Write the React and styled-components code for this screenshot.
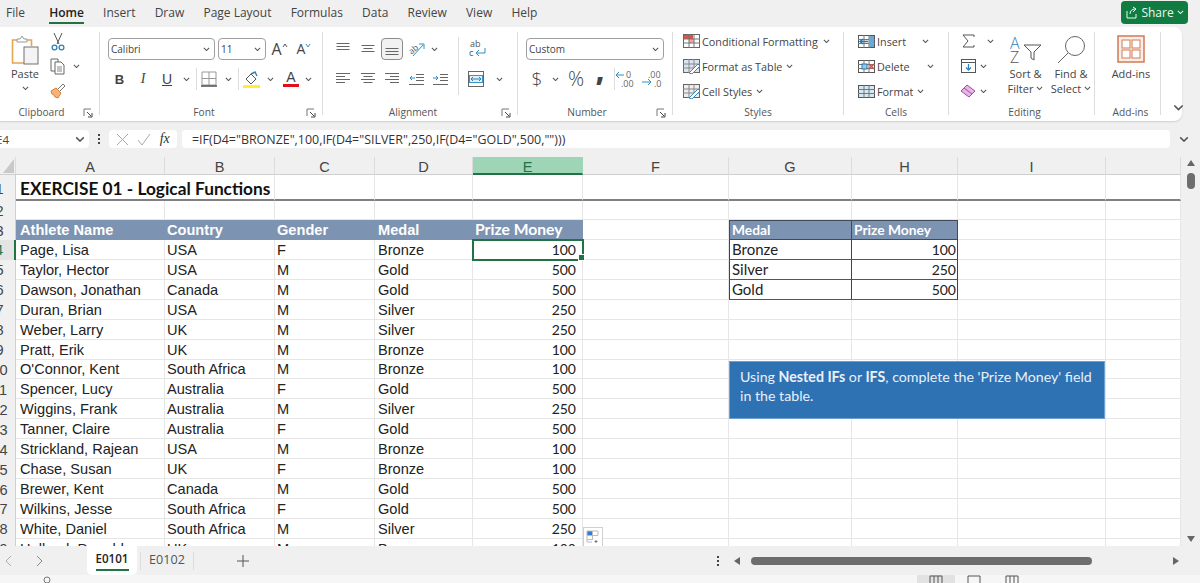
import React from "react";
import styled, { createGlobalStyle } from "styled-components";

const UI = '"Open Sans", "Liberation Sans", sans-serif';
const ARIAL = '"Liberation Sans", Arial, sans-serif';
const CALIBRI = 'Lato, "Open Sans", sans-serif';
const GREEN = "#217346";
const COLS = ["A", "B", "C", "D", "E", "F", "G", "H", "I", "J"];

const athletes = [
  ["Page, Lisa", "USA", "F", "Bronze", 100],
  ["Taylor, Hector", "USA", "M", "Gold", 500],
  ["Dawson, Jonathan", "Canada", "M", "Gold", 500],
  ["Duran, Brian", "USA", "M", "Silver", 250],
  ["Weber, Larry", "UK", "M", "Silver", 250],
  ["Pratt, Erik", "UK", "M", "Bronze", 100],
  ["O'Connor, Kent", "South Africa", "M", "Bronze", 100],
  ["Spencer, Lucy", "Australia", "F", "Gold", 500],
  ["Wiggins, Frank", "Australia", "M", "Silver", 250],
  ["Tanner, Claire", "Australia", "F", "Gold", 500],
  ["Strickland, Rajean", "USA", "M", "Bronze", 100],
  ["Chase, Susan", "UK", "F", "Bronze", 100],
  ["Brewer, Kent", "Canada", "M", "Gold", 500],
  ["Wilkins, Jesse", "South Africa", "F", "Gold", 500],
  ["White, Daniel", "South Africa", "M", "Silver", 250],
  ["Holland, Donald", "UK", "M", "Bronze", 100],
];
const prizes = [["Bronze", 100], ["Silver", 250], ["Gold", 500]];

const Global = createGlobalStyle`
  html, body { margin: 0; padding: 0; height: 100%; overflow: hidden; background: #f0f0f0; }
  * { box-sizing: border-box; }
`;

const Page = styled.div`
  width: 1200px;
  height: 583px;
  overflow: hidden;
  display: flex;
  flex-direction: column;
  font-family: ${UI};
  color: #444;
`;

const TabBar = styled.div`
  height: 27px;
  flex: none;
  display: flex;
  align-items: flex-start;
  padding-left: 6px;
  gap: 19.2px;
  font-size: 12px;
`;
const MenuTab = styled.div`
  height: 24px;
  line-height: 26px;
  white-space: nowrap;
  margin-right: ${p => p.$mr || 0}px;
  color: ${p => (p.$on ? "#222" : "#444")};
  font-weight: ${p => (p.$on ? 600 : 400)};
  border-bottom: ${p => (p.$on ? `2px solid ${GREEN}` : "none")};
`;
const ShareBtn = styled.div`
  margin: 1px 12px 0 auto;
  width: 67px;
  height: 23px;
  background: #107c41;
  border-radius: 4px;
  color: #eef7f1;
  font-size: 12px;
  display: flex;
  align-items: center;
  justify-content: center;
  gap: 3px;
`;

const Ribbon = styled.div`
  width: 1182px;
  height: 94px;
  flex: none;
  background: #fff;
  border-radius: 0 8px 8px 0;
  box-shadow: 0 1px 2px rgba(0, 0, 0, 0.14);
  display: flex;
  align-items: flex-start;
  padding-top: 5px;
  font-size: 11px;
`;
const Group = styled.div`
  width: ${p => p.$w}px;
  height: 83px;
  flex: none;
  display: flex;
  flex-direction: column;
  border-right: 1px solid #dcdcdc;
  padding-left: ${p => p.$pl || 0}px;
  position: relative;
`;
const GroupBody = styled.div`
  flex: 1;
  display: flex;
  min-height: 0;
`;
const GroupLabel = styled.div`
  height: 14px;
  line-height: 14px;
  margin-bottom: -4px;
  margin-left: ${p => -(p.$pl || 0)}px;
  text-align: center;
  font-size: 10.2px;
  color: #555;
  white-space: nowrap;
  padding-right: ${p => p.$pr || 0}px;
`;
const Launcher = styled.span`
  position: absolute;
  right: 6px;
  bottom: -3px;
  display: flex;
`;
const Rows = styled.div`
  display: flex;
  flex-direction: column;
  gap: 8px;
  padding-top: 6px;
  width: ${p => (p.$w ? `${p.$w}px` : "auto")};
  flex: none;
`;
const Row = styled.div`
  display: flex;
  align-items: center;
  height: 22px;
`;
const Tool = styled.span`
  width: ${p => p.$w}px;
  height: 22px;
  flex: none;
  display: inline-flex;
  align-items: center;
  justify-content: center;
  color: #444;
  border: ${p => (p.$on ? "1px solid #8c8c8c" : "none")};
  border-radius: 4px;
  background: ${p => (p.$on ? "#f2f2f2" : "transparent")};
`;
const GlyphB = styled.span`
  font: bold 13px ${ARIAL};
`;
const GlyphI = styled.span`
  font: italic 14px "Liberation Serif", serif;
`;
const GlyphU = styled.span`
  font: 14px ${ARIAL};
  text-decoration: underline;
`;
const GlyphBig = styled.span`
  font: ${p => p.$size}px ${UI};
  line-height: 1;
  font-weight: ${p => p.$weight || 300};
  transform: translateY(${p => p.$y || 0}px);
`;
const Select = styled.div`
  width: ${p => p.$w}px;
  height: 22px;
  flex: none;
  margin-right: ${p => p.$mr || 0}px;
  border: 1px solid #a0a0a0;
  border-radius: 4px;
  display: flex;
  align-items: center;
  justify-content: space-between;
  padding: 0 4px 0 2px;
  font-size: 10px;
`;
const Sep = styled.span`
  width: 1px;
  height: ${p => p.$h || 22}px;
  flex: none;
  background: #dcdcdc;
  margin: 0 ${p => p.$mr || 0}px 0 ${p => p.$ml || 0}px;
`;
const TallSep = styled.div`
  width: 1px;
  height: 58px;
  margin-top: 5px;
  background: #dcdcdc;
  flex: none;
`;
const ListCol = styled.div`
  display: flex;
  flex-direction: column;
  gap: 5px;
  flex: none;
  margin-top: -1px;
  width: ${p => (p.$w ? `${p.$w}px` : "auto")};
`;
const ListRow = styled.div`
  height: 20px;
  display: flex;
  align-items: center;
  gap: 2px;
  white-space: nowrap;
  font-size: 10.8px;
`;
const IconBox = styled.span`
  width: ${p => p.$w || 18}px;
  display: inline-flex;
  justify-content: center;
  flex: none;
`;
const ChevBox = styled.span`
  display: inline-flex;
  margin-left: ${p => p.$ml || 2}px;
`;
const BigBtn = styled.div`
  width: ${p => p.$w}px;
  flex: none;
  display: flex;
  flex-direction: column;
  align-items: center;
  font-size: 11px;
  line-height: 15px;
  white-space: nowrap;
`;
const BigIcon = styled.div`
  height: 34px;
  padding-top: 3px;
  display: flex;
  align-items: flex-start;
  justify-content: center;
  flex: none;
`;
const BigLine = styled.div`
  height: 15px;
  display: flex;
  align-items: center;
  gap: 3px;
`;
const Collapse = styled.div`
  margin: 72px 0 0 12px;
  display: flex;
`;

const FormulaBar = styled.div`
  height: 36px;
  flex: none;
  padding-top: 9px;
  display: flex;
  align-items: flex-start;
`;
const NameBox = styled.div`
  width: 93px;
  height: 18px;
  margin-left: -4px;
  background: #fff;
  border-radius: 4px;
  display: flex;
  align-items: center;
  justify-content: space-between;
  padding-right: 4px;
  font-size: 11.5px;
`;
const Dots = styled.div`
  width: 20px;
  height: 18px;
  display: flex;
  flex-direction: column;
  align-items: center;
  justify-content: center;
  gap: 2px;
`;
const Dot = styled.i`
  width: 2px;
  height: 2px;
  background: #444;
  display: block;
`;
const FnBox = styled.div`
  width: 68px;
  height: 18px;
  margin-right: 5px;
  background: #fff;
  border-radius: 4px;
  display: flex;
  align-items: center;
  justify-content: space-around;
  padding: 0 3px;
`;
const FxText = styled.span`
  font: italic 14px "Liberation Serif", serif;
  color: #333;
`;
const FormulaInput = styled.div`
  width: 988px;
  height: 18px;
  background: #fff;
  border-radius: 4px;
  padding-left: 10px;
  line-height: 19px;
  font-size: 12.45px;
  color: #333;
  white-space: nowrap;
`;
const FormulaChev = styled.div`
  margin-left: 9px;
  height: 18px;
  display: flex;
  align-items: center;
`;

const SheetArea = styled.div`
  height: 389px;
  flex: none;
  display: flex;
  overflow: hidden;
`;
const Sheet = styled.div`
  width: 1197px;
  margin-left: -16px;
  flex: none;
  position: relative;
  overflow: hidden;
  background: #fff;
  display: grid;
  grid-template-columns: 32px 149px 110px 100px 98px 110px 146px 123px 106px 148px 75px;
  grid-template-rows: 18px 26px 19px 20px repeat(16, 19.93px);
`;
const ColHead = styled.div`
  background: ${p => (p.$on ? "#9fd5b7" : "#f0f0f0")};
  color: ${p => (p.$on ? GREEN : "#444")};
  border-bottom: ${p => (p.$on ? `2px solid ${GREEN}` : "1px solid #cfcfcf")};
  border-right: 1px solid ${p => (p.$on ? "#9fd5b7" : "#dcdcdc")};
  font: 14.6px ${ARIAL};
  text-align: center;
  line-height: 20px;
`;
const Corner = styled.div`
  background: #f0f0f0;
  border-bottom: 1px solid #cfcfcf;
  border-right: 1px solid #dcdcdc;
  display: flex;
  align-items: flex-end;
  justify-content: flex-end;
  padding: 0 1px 1px 0;
`;
const RowHead = styled.div`
  background: ${p => (p.$on ? "#e4e4e4" : "#f0f0f0")};
  color: ${p => (p.$on ? GREEN : "#444")};
  border-right: ${p => (p.$on ? `2px solid ${GREEN}` : "1px solid #cfcfcf")};
  font: 14.6px ${ARIAL};
  display: flex;
  align-items: center;
  justify-content: center;
  padding-top: 1px;
`;
const Cell = styled.div`
  position: relative;
  display: flex;
  align-items: center;
  justify-content: ${p => (p.$right ? "flex-end" : "flex-start")};
  white-space: nowrap;
  color: #222;
  font: 14.6px ${ARIAL};
  padding: 1px ${p => p.$pr ?? 3}px 0 ${p => p.$pl ?? 2}px;
  border-right: 1px solid #e6e6e6;
  border-bottom: 1px solid #e6e6e6;
`;
const Blank = styled(Cell)`
  border-bottom: ${p => (p.$rule ? "2px solid #808080" : "1px solid #e6e6e6")};
`;
const Title = styled(Cell)`
  grid-column: span 2;
  font: bold 17.3px ${CALIBRI};
  color: #111;
  padding-left: 4px;
  padding-top: 2px;
  border-bottom: 2px solid #808080;
`;
const Band = styled(Cell)`
  background: #7d93b2;
  border-color: #7d93b2;
  color: #fff;
  font: bold 14.6px ${ARIAL};
  padding-top: 0;
`;
const BandCalibri = styled(Band)`
  font: bold 15.7px ${CALIBRI};
  padding-left: 2px;
  padding-bottom: 1px;
`;
const Money = styled(Cell)`
  font: 14px ${CALIBRI};
  color: #222;
  padding-top: 0;
`;
const ActiveCell = styled(Money)`
  outline: 2px solid ${GREEN};
  outline-offset: -1px;
  z-index: 2;
  &::after {
    content: "";
    position: absolute;
    right: -3px;
    bottom: -2px;
    width: 5px;
    height: 5px;
    background: ${GREEN};
    border: 1px solid #fff;
  }
`;
const KeyHead = styled(Cell)`
  background: #7d93b2;
  color: #fff;
  font: bold 13.8px ${CALIBRI};
  padding-top: 0;
  padding-bottom: 1px;
  border: 1px solid #3f4a5a;
  border-left-width: ${p => (p.$first ? 1 : 0)}px;
`;
const KeyCell = styled(Cell)`
  font: 15px ${CALIBRI};
  color: #222;
  padding-top: 0;
  border-right: 1px solid #444;
  border-bottom: 1px solid #555;
  border-left: ${p => (p.$first ? "1px solid #444" : "none")};
`;
const KeyNumber = styled(KeyCell)`
  font-size: 14px;
`;
const Note = styled.div`
  position: absolute;
  left: 745px;
  top: 204px;
  width: 376px;
  height: 58px;
  background: #2e72b4;
  border: 1px solid #6d9fd0;
  color: #e9f0f8;
  font: 14.2px/19px ${CALIBRI};
  padding: 5px 9px 5px 10px;
  z-index: 3;
`;
const PasteOptions = styled.div`
  position: absolute;
  left: 599px;
  top: 370px;
  width: 20px;
  height: 20px;
  background: #fff;
  border: 1px solid #d0d0d0;
  display: flex;
  align-items: center;
  justify-content: center;
  z-index: 3;
`;
const VScroll = styled.div`
  width: 19px;
  flex: none;
  display: flex;
  flex-direction: column;
  align-items: center;
  padding-top: 2px;
`;
const VThumb = styled.div`
  width: 8px;
  height: 16px;
  margin-top: 6px;
  background: #6e6e6e;
  border-radius: 4px;
`;
const VEnd = styled.div`
  margin-top: auto;
  padding-bottom: 3px;
  display: flex;
`;

const SheetTabs = styled.div`
  height: 29px;
  flex: none;
  display: flex;
  align-items: center;
  margin-left: -7px;
`;
const NavBtn = styled.span`
  width: 31px;
  display: inline-flex;
  justify-content: center;
  flex: none;
`;
const SheetTab = styled.div`
  height: 29px;
  width: ${p => p.$w}px;
  flex: none;
  display: flex;
  align-items: center;
  justify-content: center;
  font-size: ${p => (p.$on ? 11.6 : 12.6)}px;
  color: ${p => (p.$on ? "#222" : "#555")};
  background: ${p => (p.$on ? "#fff" : "transparent")};
  border-radius: ${p => (p.$on ? "0 0 5px 5px" : "0")};
  margin-left: ${p => p.$ml || 0}px;
  font-weight: ${p => (p.$on ? 600 : 400)};
`;
const TabName = styled.span`
  border-bottom: ${p => (p.$on ? `2px solid ${GREEN}` : "none")};
  padding-bottom: 2px;
  line-height: 16px;
`;
const AddSheet = styled.span`
  margin-left: 43px;
  display: inline-flex;
`;
const HDots = styled(Dots)`
  margin-left: 459px;
  height: 12px;
  width: 20px;
`;
const HScroll = styled.div`
  margin-left: 5px;
  width: 450px;
  display: flex;
  align-items: center;
`;
const HThumb = styled.div`
  width: 341px;
  height: 8px;
  background: #6e6e6e;
  border-radius: 4px;
  margin: 0 80px 0 10px;
  flex: none;
`;
const StatusBar = styled.div`
  height: 8px;
  flex: none;
  background: #f6f6f6;
  display: flex;
  align-items: flex-start;
  overflow: hidden;
`;
const StatusGlyph = styled.span`
  display: inline-flex;
  margin-left: ${p => p.$ml}px;
`;
const ViewBtn = styled.span`
  width: 38px;
  height: 8px;
  margin-left: ${p => p.$ml || 0}px;
  flex: none;
  display: flex;
  justify-content: center;
  background: ${p => (p.$on ? "#e2e2e2" : "transparent")};
`;

const Svg = ({ w, h, children, stroke = "#666" }) => (
  <svg width={w} height={h} viewBox={`0 0 ${w} ${h}`} fill="none" stroke={stroke} strokeWidth="1" style={{ display: "block", flex: "none" }}>
    {children}
  </svg>
);

const Chev = ({ color = "#555", size = 7 }) => (
  <svg width={size} height={size * 0.65} viewBox="0 0 8 5" fill="none" stroke={color} strokeWidth="1.2" style={{ display: "block", flex: "none" }}>
    <path d="M1 1l3 3 3-3" />
  </svg>
);

const LauncherIcon = () => (
  <Launcher>
    <Svg w={10} h={10} stroke="#777">
      <path d="M1 8V1h7" />
      <path d="M4 4l4 4M9 5v4H5" stroke="#444" />
    </Svg>
  </Launcher>
);

const Lines = ({ ys, widths, w = 16, align = "left" }) => (
  <Svg w={w} h={16} stroke="#666">
    {ys.map((y, i) => {
      const len = widths[i];
      const x = align === "left" ? 1 : align === "right" ? w - 1 - len : (w - len) / 2;
      return <path key={y} d={`M${x} ${y + 0.5}h${len}`} />;
    })}
  </Svg>
);

const PasteIcon = () => (
  <Svg w={28} h={30}>
    <path d="M7 5H1.5v23h12" stroke="#e6a552" strokeWidth="1.6" />
    <path d="M15 5h5.5v6" stroke="#e6a552" strokeWidth="1.6" />
    <path d="M6 7V4h3l2-3 2 3h3v3z" stroke="#999" fill="#fff" />
    <rect x="13" y="12" width="14" height="17" fill="#f4f4f4" stroke="#707070" />
  </Svg>
);
const Scissors = () => (
  <Svg w={14} h={19}>
    <path d="M3 1l5 11M11 1L6 12" stroke="#555" />
    <circle cx="3.5" cy="15.5" r="2.4" stroke="#2f82b8" strokeWidth="1.3" />
    <circle cx="10.5" cy="15.5" r="2.4" stroke="#2f82b8" strokeWidth="1.3" />
  </Svg>
);
const CopyIcon = () => (
  <Svg w={16} h={17}>
    <path d="M5 13H1V1h7v3" stroke="#666" />
    <path d="M5 4h6l3 3v9H5z" fill="#fff" stroke="#666" />
    <path d="M7 9h5M7 11h5M7 13h5" stroke="#888" />
  </Svg>
);
const BrushIcon = () => (
  <Svg w={16} h={16}>
    <path d="M1 8l5-3 5 5-3 5-3-1-1-2-2-1z" fill="#f5b37c" stroke="#dc7f35" />
    <path d="M8 6l5-5 2 2-5 5" stroke="#777" fill="#fff" />
  </Svg>
);
const FontGrow = ({ up, size }) => (
  <>
    <GlyphBig $size={size} $weight={400}>A</GlyphBig>
    <Svg w={6} h={14} stroke={up ? "#555" : "#3d8fc4"}>
      <path d={up ? "M1 5l2-3 2 3" : "M1 2l2 3 2-3"} />
    </Svg>
  </>
);
const BorderIcon = () => (
  <Svg w={16} h={16} stroke="#999">
    <path d="M1 1h14v13H1zM8 1v13M1 7.5h14" />
    <path d="M0 15h16" stroke="#444" strokeWidth="1.4" />
  </Svg>
);
const FillIcon = () => (
  <Svg w={17} h={17}>
    <path d="M3 8l5-5 5 5-5 5z" stroke="#555" fill="#fff" />
    <path d="M8 3l4-2 2 4" stroke="#2f82b8" strokeWidth="1.4" />
    <rect x="0" y="14" width="17" height="3" fill="#ffef2e" stroke="none" />
  </Svg>
);
const FontColor = () => (
  <Svg w={16} h={18}>
    <text x="8" y="12" textAnchor="middle" fontFamily={ARIAL} fontSize="14" fill="#444" stroke="none">A</text>
    <rect x="0" y="14" width="16" height="3" fill="#e0101a" stroke="none" />
  </Svg>
);
const OrientIcon = () => (
  <Svg w={18} h={16}>
    <text x="1" y="11" fontFamily={UI} fontSize="8.5" fill="#555" stroke="none" transform="rotate(-40 6 9)">ab</text>
    <path d="M5 15L15 4M11 3h5v5" stroke="#2f8fc4" />
  </Svg>
);
const WrapIcon = () => (
  <Svg w={18} h={20}>
    <text x="2" y="8" fontFamily={UI} fontSize="9" fill="#555" stroke="none">ab</text>
    <text x="1" y="17" fontFamily={UI} fontSize="9" fill="#555" stroke="none">c</text>
    <path d="M17 9v5H8M11 11l-3 3 3 3" stroke="#2f8fc4" />
  </Svg>
);
const MergeIcon = () => (
  <Svg w={16} h={16} stroke="#4b8fb0">
    <rect x="0.5" y="0.5" width="15" height="15" stroke="#666" />
    <rect x="1.5" y="4.5" width="13" height="7" fill="#e0f0f8" stroke="#3b93c8" />
    <path d="M3 8h10M5 6L3 8l2 2M11 6l2 2-2 2" stroke="#2f7fb8" />
  </Svg>
);
const IndentIcon = ({ out }) => (
  <Svg w={15} h={13}>
    <path d="M7 1.5h8M7 4.5h8M7 7.5h8M0 11.5h15" stroke="#666" />
    <path d={out ? "M6 5H1M3 3L1 5l2 2" : "M0 5h5M3 3l2 2-2 2"} stroke="#2f8fc4" />
  </Svg>
);
const DecimalIcon = ({ inc }) => (
  <Svg w={22} h={18}>
    <text x={inc ? 11 : 7} y="8" fontFamily={UI} fontSize="9" fill="#666" stroke="none">{inc ? "0" : ".00"}</text>
    <text x={inc ? 6 : 13} y="17" fontFamily={UI} fontSize="9" fill="#666" stroke="none">{inc ? ".00" : ".0"}</text>
    <path d={inc ? "M9 5H1M4 2L1 5l3 3" : "M1 12h9M7 9l3 3-3 3"} stroke="#2f8fc4" />
  </Svg>
);
const CondIcon = () => (
  <Svg w={17} h={14}>
    <rect x="0.5" y="0.5" width="16" height="13" stroke="#666" fill="#fff" />
    <rect x="1" y="1" width="9" height="4" fill="#e2504a" stroke="none" />
    <rect x="6" y="5" width="5" height="4" fill="#f2a6a0" stroke="none" />
    <path d="M0 5h17M0 9h17M6 0v14M11 0v14" stroke="#777" />
  </Svg>
);
const TablePenIcon = ({ blue }) => (
  <Svg w={17} h={15}>
    <rect x="0.5" y="0.5" width="16" height="13" stroke="#666" fill={blue ? "#d9e6f2" : "#eee"} />
    <path d="M0 5h17M0 9h17M6 0v14M11 0v14" stroke="#888" />
    <path d="M6 14l9-9 2 2-8 8z" fill="#fff" stroke="#3c89bd" />
  </Svg>
);
const CellsIcon = ({ kind }) => (
  <Svg w={17} h={15}>
    <rect x="0.5" y="1.5" width="16" height="12" stroke="#555" fill={kind === "format" ? "#d5e8f6" : "#fff"} />
    <path d="M0 5.5h17M0 9.5h17M6 1v13M11 1v13" stroke="#777" />
    {kind === "insert" && <rect x="11" y="2" width="5" height="11" fill="#6aa9d6" stroke="none" />}
    {kind === "insert" && <path d="M10 7.5H2M5 5L2 7.5 5 10" stroke="#2278b5" strokeWidth="1.4" />}
    {kind === "delete" && <path d="M11 5l5 5M16 5l-5 5" stroke="#d8453f" strokeWidth="1.3" />}
    {kind === "delete" && <rect x="4" y="5" width="5" height="5" fill="#9cc8e6" stroke="#2278b5" />}
  </Svg>
);
const SigmaIcon = () => (
  <Svg w={13} h={14} stroke="#555">
    <path d="M12 3V1H1l5 6-5 6h11v-2" />
  </Svg>
);
const FillDown = () => (
  <Svg w={15} h={14}>
    <rect x="0.5" y="0.5" width="14" height="13" stroke="#555" />
    <path d="M0 3.5h15" stroke="#555" />
    <path d="M7.5 5v6M5 8.5l2.5 2.5L10 8.5" stroke="#2f82c0" strokeWidth="1.3" />
  </Svg>
);
const EraserIcon = () => (
  <Svg w={16} h={14}>
    <path d="M1 7l6-6 8 6-6 6z" fill="#e7b6e6" stroke="#a64aa6" />
    <path d="M4 4l8 6" stroke="#a64aa6" />
  </Svg>
);
const SortIcon = () => (
  <Svg w={32} h={30}>
    <text x="0" y="14" fontFamily={UI} fontSize="16" fontWeight="300" fill="#2f82c0" stroke="none">A</text>
    <text x="0" y="28" fontFamily={UI} fontSize="16" fontWeight="300" fill="#555" stroke="none">Z</text>
    <path d="M14 10h17l-7 7v8l-3-2v-6z" stroke="#555" />
  </Svg>
);
const FindIcon = () => (
  <Svg w={30} h={30} stroke="#666">
    <circle cx="19" cy="11" r="9.5" />
    <path d="M12 18L2 28" />
  </Svg>
);
const AddinsIcon = () => (
  <Svg w={28} h={28} stroke="#d17a56">
    <rect x="1" y="1" width="26" height="26" strokeWidth="1.5" fill="#fbeee8" />
    <rect x="5" y="5" width="8" height="8" fill="#fff" />
    <rect x="15" y="5" width="8" height="8" fill="#fff" />
    <rect x="5" y="15" width="8" height="8" fill="#fff" />
    <rect x="15" y="15" width="8" height="8" fill="#fff" />
  </Svg>
);
const ShareIcon = () => (
  <Svg w={13} h={13} stroke="#eef7f1">
    <path d="M2 5v7h9V8M5 8c0-3 2-5 5-5M8 1l3 2-3 3" />
  </Svg>
);
const PasteBadge = () => (
  <Svg w={14} h={14}>
    <rect x="1" y="1" width="5" height="4" fill="#2b7cd3" stroke="none" />
    <path d="M1 5.5h11M1 9.5h6M6.5 1v9M1 1h11v4M1 1v11h5" stroke="#bbb" />
    <path d="M10 10v3M8.5 11.5h3" stroke="#777" />
  </Svg>
);
const Tri = ({ dir, color = "#666", size = 8 }) => {
  const d = { up: "M0 7L4 1l4 6z", down: "M0 1l4 6 4-6z", left: "M7 0L1 4l6 4z", right: "M1 0l6 4-6 4z" }[dir];
  return (
    <svg width={size} height={size} viewBox="0 0 8 8" style={{ display: "block", flex: "none" }}>
      <path d={d} fill={color} />
    </svg>
  );
};

const ClipboardGroup = () => (
  <Group $w={100}>
    <GroupBody>
      <BigBtn $w={50}>
        <BigIcon>
          <PasteIcon />
        </BigIcon>
        <BigLine>Paste</BigLine>
        <BigLine><Chev /></BigLine>
      </BigBtn>
      <ListCol>
        <ListRow><IconBox $w={16}><Scissors /></IconBox></ListRow>
        <ListRow><IconBox $w={16}><CopyIcon /></IconBox><ChevBox $ml={5}><Chev /></ChevBox></ListRow>
        <ListRow><IconBox $w={16}><BrushIcon /></IconBox></ListRow>
      </ListCol>
    </GroupBody>
    <GroupLabel $pr={16}>Clipboard</GroupLabel>
    <LauncherIcon />
  </Group>
);

const FontGroup = () => (
  <Group $w={223} $pl={8}>
    <GroupBody>
      <Rows>
        <Row>
          <Select $w={107} $mr={3}>Calibri<Chev /></Select>
          <Select $w={48}>11<Chev /></Select>
          <Tool $w={27}><FontGrow up size={16} /></Tool>
          <Tool $w={22}><FontGrow size={14} /></Tool>
        </Row>
        <Row>
          <Tool $w={23}><GlyphB>B</GlyphB></Tool>
          <Tool $w={24}><GlyphI>I</GlyphI></Tool>
          <Tool $w={24}><GlyphU>U</GlyphU></Tool>
          <Tool $w={14}><Chev /></Tool>
          <Sep $ml={3} $mr={2} />
          <Tool $w={20}><BorderIcon /></Tool>
          <Tool $w={18}><Chev /></Tool>
          <Sep $ml={1} />
          <Tool $w={24}><FillIcon /></Tool>
          <Tool $w={14}><Chev /></Tool>
          <Tool $w={28}><FontColor /></Tool>
          <Tool $w={6}><Chev /></Tool>
        </Row>
      </Rows>
    </GroupBody>
    <GroupLabel $pl={8} $pr={14}>Font</GroupLabel>
    <LauncherIcon />
  </Group>
);

const AlignmentGroup = () => (
  <Group $w={195} $pl={8}>
    <GroupBody>
      <Rows $w={127}>
        <Row>
          <Tool $w={24}><Lines ys={[2, 5, 8]} widths={[13, 13, 13]} align="center" /></Tool>
          <Tool $w={26}><Lines ys={[4, 7, 10]} widths={[13, 9, 13]} align="center" /></Tool>
          <Tool $w={22} $on><Lines ys={[7, 10, 13]} widths={[13, 13, 13]} align="center" /></Tool>
          <Tool $w={28}><OrientIcon /></Tool>
          <Tool $w={6}><Chev /></Tool>
        </Row>
        <Row>
          <Tool $w={24}><Lines ys={[2, 5, 8, 11]} widths={[14, 9, 14, 9]} /></Tool>
          <Tool $w={25}><Lines ys={[2, 5, 8, 11]} widths={[14, 9, 14, 9]} align="center" /></Tool>
          <Tool $w={24}><Lines ys={[2, 5, 8, 11]} widths={[14, 9, 14, 9]} align="right" /></Tool>
          <Tool $w={24}><IndentIcon out /></Tool>
          <Tool $w={25}><IndentIcon /></Tool>
        </Row>
      </Rows>
      <TallSep />
      <Rows>
        <Row><Tool $w={36}><WrapIcon /></Tool></Row>
        <Row>
          <Tool $w={34}><MergeIcon /></Tool>
          <Tool $w={12}><Chev /></Tool>
        </Row>
      </Rows>
    </GroupBody>
    <GroupLabel $pl={8} $pr={14}>Alignment</GroupLabel>
    <LauncherIcon />
  </Group>
);

const NumberGroup = () => (
  <Group $w={155} $pl={8}>
    <GroupBody>
      <Rows>
        <Row><Select $w={138}>Custom<Chev /></Select></Row>
        <Row>
          <Tool $w={22}><GlyphBig $size={19}>$</GlyphBig></Tool>
          <Tool $w={14}><Chev /></Tool>
          <Tool $w={28}><GlyphBig $size={20}>%</GlyphBig></Tool>
          <Tool $w={20}><GlyphBig $size={28} $weight={800} $y={-9}>,</GlyphBig></Tool>
          <Sep $ml={4} />
          <Tool $w={22}><DecimalIcon inc /></Tool>
          <Tool $w={30}><DecimalIcon /></Tool>
        </Row>
      </Rows>
    </GroupBody>
    <GroupLabel $pl={8} $pr={16}>Number</GroupLabel>
    <LauncherIcon />
  </Group>
);

const StylesGroup = () => (
  <Group $w={171} $pl={9}>
    <GroupBody>
      <ListCol>
        <ListRow><IconBox><CondIcon /></IconBox>Conditional Formatting<ChevBox $ml={3}><Chev /></ChevBox></ListRow>
        <ListRow><IconBox><TablePenIcon blue /></IconBox>Format as Table<ChevBox $ml={2}><Chev /></ChevBox></ListRow>
        <ListRow><IconBox><TablePenIcon /></IconBox>Cell Styles<ChevBox $ml={2}><Chev /></ChevBox></ListRow>
      </ListCol>
    </GroupBody>
    <GroupLabel $pl={9}>Styles</GroupLabel>
  </Group>
);

const CellsGroup = () => (
  <Group $w={105} $pl={13}>
    <GroupBody>
      <ListCol>
        <ListRow><IconBox><CellsIcon kind="insert" /></IconBox>Insert<ChevBox $ml={14}><Chev /></ChevBox></ListRow>
        <ListRow><IconBox><CellsIcon kind="delete" /></IconBox>Delete<ChevBox $ml={15}><Chev /></ChevBox></ListRow>
        <ListRow><IconBox><CellsIcon kind="format" /></IconBox>Format<ChevBox $ml={2}><Chev /></ChevBox></ListRow>
      </ListCol>
    </GroupBody>
    <GroupLabel $pl={13}>Cells</GroupLabel>
  </Group>
);

const EditingGroup = () => (
  <Group $w={146} $pl={9}>
    <GroupBody>
      <ListCol $w={45}>
        <ListRow><IconBox $w={20}><SigmaIcon /></IconBox><ChevBox $ml={7}><Chev /></ChevBox></ListRow>
        <ListRow><IconBox $w={20}><FillDown /></IconBox><Chev /></ListRow>
        <ListRow><IconBox $w={20}><EraserIcon /></IconBox><Chev /></ListRow>
      </ListCol>
      <BigBtn $w={45}>
        <BigIcon><SortIcon /></BigIcon>
        <BigLine>Sort &amp;</BigLine>
        <BigLine>Filter<Chev /></BigLine>
      </BigBtn>
      <BigBtn $w={46}>
        <BigIcon><FindIcon /></BigIcon>
        <BigLine>Find &amp;</BigLine>
        <BigLine>Select<Chev /></BigLine>
      </BigBtn>
    </GroupBody>
    <GroupLabel $pl={3}>Editing</GroupLabel>
  </Group>
);

const AddinsGroup = () => (
  <Group $w={66} $pl={6}>
    <GroupBody>
      <BigBtn $w={60}>
        <BigIcon><AddinsIcon /></BigIcon>
        <BigLine>Add-ins</BigLine>
      </BigBtn>
    </GroupBody>
    <GroupLabel>Add-ins</GroupLabel>
  </Group>
);

const blanks = (from, to, rule) =>
  COLS.slice(from, to).map(c => <Blank key={c} $rule={rule} />);

const SheetGrid = () => (
  <Sheet>
    <Corner>
      <Svg w={11} h={14} stroke="none">
        <path d="M11 0v14H0z" fill="#c9c9c9" />
      </Svg>
    </Corner>
    {COLS.map(c => <ColHead key={c} $on={c === "E"}>{c === "J" ? "" : c}</ColHead>)}

    <RowHead>1</RowHead>
    <Title>EXERCISE 01 - Logical Functions</Title>
    {blanks(2, 10, true)}

    <RowHead>2</RowHead>
    {blanks(0, 10)}

    <RowHead>3</RowHead>
    <Band $pl={4}>Athlete Name</Band>
    <Band>Country</Band>
    <Band>Gender</Band>
    <Band $pl={3}>Medal</Band>
    <BandCalibri>Prize Money</BandCalibri>
    <Blank />
    <KeyHead $first>Medal</KeyHead>
    <KeyHead>Prize Money</KeyHead>
    {blanks(8, 10)}

    {athletes.map((a, i) => {
      const prize = prizes[i];
      const MoneyCell = i === 0 ? ActiveCell : Money;
      return (
        <React.Fragment key={a[0]}>
          <RowHead $on={i === 0}>{i + 4}</RowHead>
          <Cell $pl={4}>{a[0]}</Cell>
          <Cell>{a[1]}</Cell>
          <Cell>{a[2]}</Cell>
          <Cell $pl={3}>{a[3]}</Cell>
          <MoneyCell $right $pr={6}>{a[4]}</MoneyCell>
          <Blank />
          {prize ? (
            <>
              <KeyCell $first>{prize[0]}</KeyCell>
              <KeyNumber $right $pr={1}>{prize[1]}</KeyNumber>
            </>
          ) : (
            blanks(6, 8)
          )}
          {blanks(8, 10)}
        </React.Fragment>
      );
    })}

    <Note>
      Using <b>Nested IFs</b> or <b>IFS</b>, complete the 'Prize Money' field in the table.
    </Note>
    <PasteOptions><PasteBadge /></PasteOptions>
  </Sheet>
);

export default function App() {
  return (
    <Page>
      <Global />
      <TabBar>
        <MenuTab $mr={5}>File</MenuTab>
        <MenuTab $on>Home</MenuTab>
        <MenuTab>Insert</MenuTab>
        <MenuTab>Draw</MenuTab>
        <MenuTab>Page Layout</MenuTab>
        <MenuTab>Formulas</MenuTab>
        <MenuTab>Data</MenuTab>
        <MenuTab>Review</MenuTab>
        <MenuTab>View</MenuTab>
        <MenuTab>Help</MenuTab>
        <ShareBtn><ShareIcon />Share<Chev color="#eef7f1" size={7} /></ShareBtn>
      </TabBar>

      <Ribbon>
        <ClipboardGroup />
        <FontGroup />
        <AlignmentGroup />
        <NumberGroup />
        <StylesGroup />
        <CellsGroup />
        <EditingGroup />
        <AddinsGroup />
        <Collapse><Chev size={11} /></Collapse>
      </Ribbon>

      <FormulaBar>
        <NameBox>E4<Chev size={10} /></NameBox>
        <Dots><Dot /><Dot /><Dot /></Dots>
        <FnBox>
          <Svg w={13} h={13} stroke="#aaa"><path d="M1 1l11 11M12 1L1 12" /></Svg>
          <Svg w={14} h={13} stroke="#aaa"><path d="M1 7l4 5 8-11" /></Svg>
          <FxText>fx</FxText>
        </FnBox>
        <FormulaInput>=IF(D4="BRONZE",100,IF(D4="SILVER",250,IF(D4="GOLD",500,"")))</FormulaInput>
        <FormulaChev><Chev size={10} /></FormulaChev>
      </FormulaBar>

      <SheetArea>
        <SheetGrid />
        <VScroll>
          <Tri dir="up" />
          <VThumb />
          <VEnd><Tri dir="down" /></VEnd>
        </VScroll>
      </SheetArea>

      <SheetTabs>
        <NavBtn><Svg w={7} h={12} stroke="#aaa"><path d="M6 1L1 6l5 5" /></Svg></NavBtn>
        <NavBtn><Svg w={7} h={12} stroke="#888"><path d="M1 1l5 5-5 5" /></Svg></NavBtn>
        <SheetTab $w={50} $ml={32} $on><TabName $on>E0101</TabName></SheetTab>
        <Sep $ml={3} $h={18} />
        <SheetTab $w={52}><TabName>E0102</TabName></SheetTab>
        <Sep $h={18} />
        <AddSheet><Svg w={12} h={12} stroke="#555"><path d="M6 0v12M0 6h12" /></Svg></AddSheet>
        <HDots><Dot /><Dot /><Dot /></HDots>
        <HScroll>
          <Tri dir="left" />
          <HThumb />
          <Tri dir="right" />
        </HScroll>
      </SheetTabs>

      <StatusBar>
        <StatusGlyph $ml={42}>
          <Svg w={10} h={8} stroke="#777"><circle cx="5" cy="5" r="3" /></Svg>
        </StatusGlyph>
        <ViewBtn $ml={865} $on><Svg w={14} h={8} stroke="#555"><path d="M1 8V1h12v7M5 1v7M9 1v7" /></Svg></ViewBtn>
        <ViewBtn><Svg w={14} h={8} stroke="#555"><path d="M1 8V1h12v7" /></Svg></ViewBtn>
        <ViewBtn><Svg w={14} h={8} stroke="#555"><path d="M1 8V1h12v7M5 1v7M9 1v7" /></Svg></ViewBtn>
      </StatusBar>
    </Page>
  );
}
